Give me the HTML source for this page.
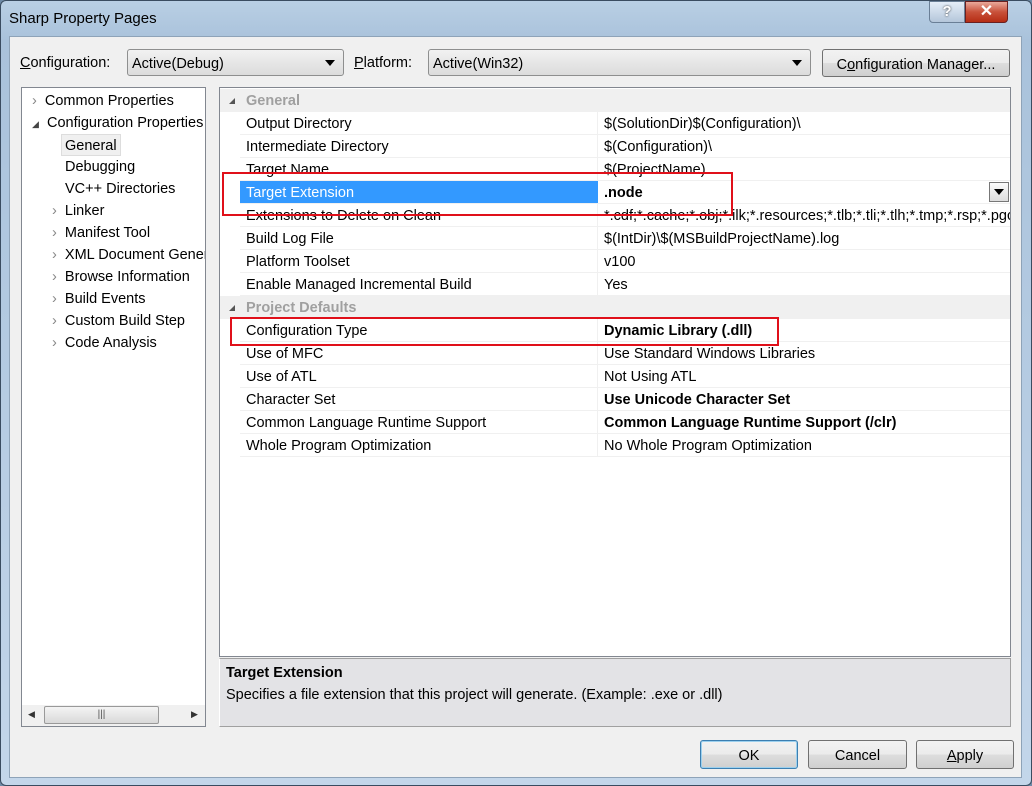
<!DOCTYPE html><html><head><style>
*{margin:0;padding:0;box-sizing:border-box}
body{width:1032px;height:786px;overflow:hidden;background:#6e8aa6;font-family:"Liberation Sans",sans-serif;font-size:14.5px;color:#000;position:relative}
.a{position:absolute}
.frame{left:0;top:0;width:1032px;height:786px;background:linear-gradient(#b9cfe4,#a9c2db 40px,#c3d6ea);border:1px solid #3a4c60;border-radius:6px}
.body{left:9px;top:36px;width:1013px;height:742px;background:#f0f0f0;border:1px solid #8ea3b8}
.combo{height:27px;border:1px solid #8e8f8f;border-radius:3px;background:linear-gradient(#f2f2f2,#e6e6e6 50%,#dcdcdc);padding:5px 4px 0;line-height:19px}
.combo:after{content:"";position:absolute;right:8px;top:10px;border:5px solid transparent;border-top:6px solid #000}
.btn{border:1px solid #707070;border-radius:3px;background:linear-gradient(#f2f2f2,#ebebeb 50%,#dddddd 51%,#cfcfcf);text-align:center;line-height:30px}
.tree div{position:absolute;left:0;height:22px;line-height:22px;white-space:nowrap}
.grid .r{position:absolute;left:20px;width:770px;height:23px;border-bottom:1px solid #f0f0f0;line-height:24px;white-space:nowrap;overflow:hidden}
.r span{position:absolute;left:6px}
.r b,.r i{position:absolute;left:364px;font-style:normal}
.r:before{content:"";position:absolute;left:357px;top:0;height:23px;border-left:1px solid #f0f0f0}
.cat{position:absolute;left:0;width:790px;height:23px;background:#f0f0f0;color:#a0a0a0;font-weight:bold;line-height:25px}
.cat span{position:absolute;left:26px}
.cat:before{content:"";position:absolute;left:9px;top:9px;border-left:6px solid transparent;border-bottom:6px solid #555}
.red{position:absolute;border:2px solid #e0101a}
</style></head><body>
<div class="a frame"></div>
<div class="a" style="left:9px;top:10px;font-size:15px">Sharp Property Pages</div>
<div class="a" style="left:929px;top:1px;width:36px;height:22px;border:1px solid #6a7f96;border-radius:0 0 0 4px;background:linear-gradient(#e5eef8,#b4c6da);text-align:center;color:#fff;font-weight:bold;line-height:20px;text-shadow:0 0 2px #333">?</div>
<div class="a" style="left:965px;top:1px;width:43px;height:22px;border:1px solid #6a2020;border-radius:0 0 4px 0;background:linear-gradient(#e9a99b,#c8513a 50%,#b62d14);text-align:center;color:#fff;font-weight:bold;line-height:20px;font-size:16px">✕</div>
<div class="a body"></div>
<div class="a" style="left:20px;top:55px"><u>C</u>onfiguration:</div>
<div class="a combo" style="left:127px;top:49px;width:217px">Active(Debug)</div>
<div class="a" style="left:354px;top:55px"><u>P</u>latform:</div>
<div class="a combo" style="left:428px;top:49px;width:383px">Active(Win32)</div>
<div class="a btn" style="left:822px;top:49px;width:188px;height:28px">C<u>o</u>nfiguration Manager...</div>

<div class="a" style="left:21px;top:87px;width:185px;height:640px;background:#fff;border:1px solid #828790"></div>
<div class="a tree" style="left:32px;top:90px">
<div style="top:0"><span style="color:#888">›</span>&nbsp;&nbsp;Common Properties</div>
<div style="top:22px"><span style="font-size:9px;color:#444">◢</span>&nbsp;&nbsp;Configuration Properties</div>
<div style="top:44px;left:29px;background:#f0f0f0;border:1px solid #ddd;padding:0 3px;height:22px">General</div>
<div style="top:66px;left:33px">Debugging</div>
<div style="top:88px;left:33px">VC++ Directories</div>
<div style="top:110px;left:20px"><span style="color:#888">›</span>&nbsp;&nbsp;Linker</div>
<div style="top:132px;left:20px"><span style="color:#888">›</span>&nbsp;&nbsp;Manifest Tool</div>
<div style="top:154px;left:20px;width:153px;overflow:hidden"><span style="color:#888">›</span>&nbsp;&nbsp;XML Document Generator</div>
<div style="top:176px;left:20px"><span style="color:#888">›</span>&nbsp;&nbsp;Browse Information</div>
<div style="top:198px;left:20px"><span style="color:#888">›</span>&nbsp;&nbsp;Build Events</div>
<div style="top:220px;left:20px"><span style="color:#888">›</span>&nbsp;&nbsp;Custom Build Step</div>
<div style="top:242px;left:20px"><span style="color:#888">›</span>&nbsp;&nbsp;Code Analysis</div>
</div>
<div class="a" style="left:22px;top:705px;width:183px;height:21px;background:#f0f0f0"></div>
<div class="a" style="left:44px;top:706px;width:115px;height:18px;border:1px solid #999;border-radius:2px;background:linear-gradient(#f4f4f4,#d9d9d9);text-align:center;font-size:10px;line-height:16px;color:#555">|||</div>
<div class="a" style="left:28px;top:709px;font-size:9px;color:#333">◀</div>
<div class="a" style="left:191px;top:709px;font-size:9px;color:#333">▶</div>

<div class="a" style="left:219px;top:87px;width:792px;height:570px;background:#fff;border:1px solid #828790"></div>
<div class="a grid" style="left:220px;top:89px;width:790px;height:566px">
<div class="cat" style="top:0"><span>General</span></div>
<div class="r" style="top:23px"><span>Output Directory</span><i>$(SolutionDir)$(Configuration)\</i></div>
<div class="r" style="top:46px"><span>Intermediate Directory</span><i>$(Configuration)\</i></div>
<div class="r" style="top:69px"><span>Target Name</span><i>$(ProjectName)</i></div>
<div class="r" style="top:92px"><span style="left:0;width:358px;height:22px;background:#3399ff;color:#fff;padding-left:6px">Target Extension</span><b>.node</b></div>
<div class="r" style="top:115px"><span>Extensions to Delete on Clean</span><i>*.cdf;*.cache;*.obj;*.ilk;*.resources;*.tlb;*.tli;*.tlh;*.tmp;*.rsp;*.pgc;*.pgd</i></div>
<div class="r" style="top:138px"><span>Build Log File</span><i>$(IntDir)\$(MSBuildProjectName).log</i></div>
<div class="r" style="top:161px"><span>Platform Toolset</span><i>v100</i></div>
<div class="r" style="top:184px"><span>Enable Managed Incremental Build</span><i>Yes</i></div>
<div class="cat" style="top:207px"><span>Project Defaults</span></div>
<div class="r" style="top:230px"><span>Configuration Type</span><b>Dynamic Library (.dll)</b></div>
<div class="r" style="top:253px"><span>Use of MFC</span><i>Use Standard Windows Libraries</i></div>
<div class="r" style="top:276px"><span>Use of ATL</span><i>Not Using ATL</i></div>
<div class="r" style="top:299px"><span>Character Set</span><b>Use Unicode Character Set</b></div>
<div class="r" style="top:322px"><span>Common Language Runtime Support</span><b>Common Language Runtime Support (/clr)</b></div>
<div class="r" style="top:345px"><span>Whole Program Optimization</span><i>No Whole Program Optimization</i></div>
</div>
<div class="a" style="left:989px;top:182px;width:20px;height:20px;border:1px solid #777;background:linear-gradient(#fafafa,#ddd)"></div>
<div class="a" style="left:994px;top:189px;border:5px solid transparent;border-top:6px solid #000"></div>
<div class="red" style="left:222px;top:172px;width:511px;height:44px"></div>
<div class="red" style="left:230px;top:317px;width:549px;height:29px"></div>

<div class="a" style="left:219px;top:658px;width:792px;height:69px;background:#e3e3e6;border:1px solid #a0a0a0;border-left-color:#fff;border-top-color:#a0a0a0"></div>
<div class="a" style="left:226px;top:665px;font-weight:bold">Target Extension</div>
<div class="a" style="left:226px;top:687px">Specifies a file extension that this project will generate. (Example: .exe or .dll)</div>

<div class="a btn" style="left:700px;top:740px;width:98px;height:29px;border-color:#3c7fb1;box-shadow:inset 0 0 0 1px #9cd0ee">OK</div>
<div class="a btn" style="left:808px;top:740px;width:99px;height:29px">Cancel</div>
<div class="a btn" style="left:916px;top:740px;width:98px;height:29px"><u>A</u>pply</div>
</body></html>
